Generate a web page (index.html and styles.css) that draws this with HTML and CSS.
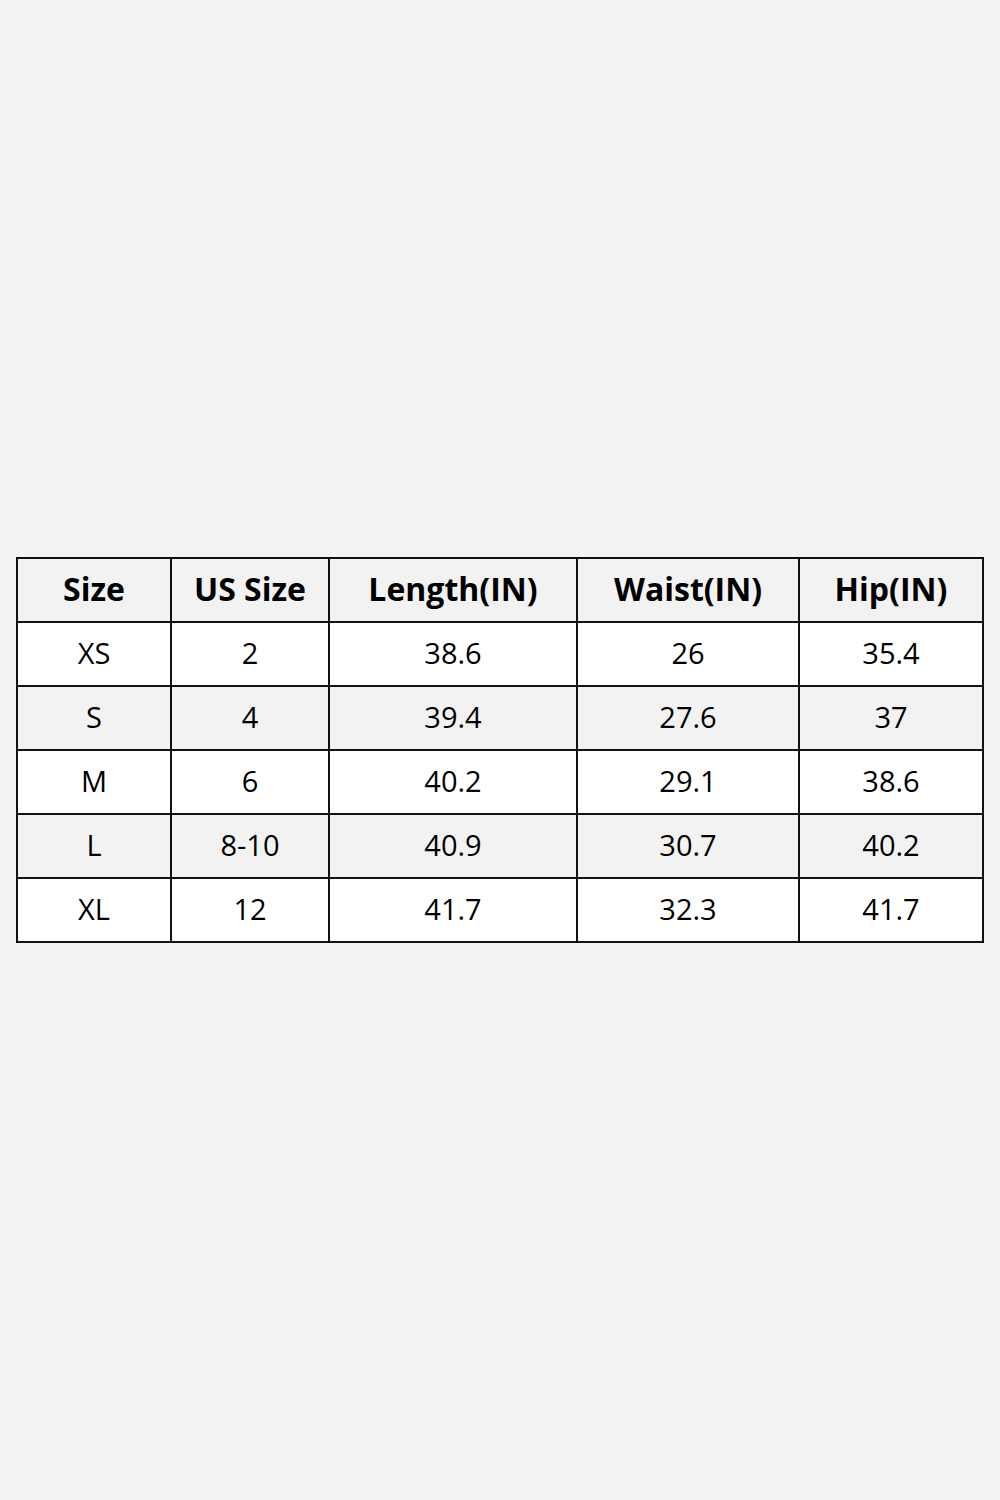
FILE: index.html
```html
<!DOCTYPE html>
<html>
<head>
<meta charset="utf-8">
<link rel="stylesheet" href="styles.css">
</head>
<body>
<div class="page">
<table class="chart">
<colgroup>
<col class="c1"><col class="c2"><col class="c3"><col class="c4"><col class="c5">
</colgroup>
<thead>
<tr class="head"><th>Size</th><th>US Size</th><th>Length(IN)</th><th>Waist(IN)</th><th>Hip(IN)</th></tr>
</thead>
<tbody>
<tr><td>XS</td><td>2</td><td>38.6</td><td>26</td><td>35.4</td></tr>
<tr class="alt"><td>S</td><td>4</td><td>39.4</td><td>27.6</td><td>37</td></tr>
<tr><td>M</td><td>6</td><td>40.2</td><td>29.1</td><td>38.6</td></tr>
<tr class="alt"><td>L</td><td>8-10</td><td>40.9</td><td>30.7</td><td>40.2</td></tr>
<tr><td>XL</td><td>12</td><td>41.7</td><td>32.3</td><td>41.7</td></tr>
</tbody>
</table>
</div>
</body>
</html>
```

FILE: styles.css
```css
html, body {
  margin: 0;
  padding: 0;
  background: #f2f3f5;
}
.page {
  height: 1500px;
  display: flex;
  align-items: center;
  justify-content: center;
}
.chart {
  border-collapse: collapse;
  width: 966px;
  table-layout: fixed;
  font-family: "Open Sans", "Noto Sans", sans-serif;
  color: #000;
  border: 2px solid #111;
}
.c1 { width: 154px; }
.c2 { width: 158px; }
.c3 { width: 248px; }
.c4 { width: 222px; }
.c5 { width: 184px; }
.chart th, .chart td {
  border: 2px solid #111;
  height: 58px;
  padding: 0 0 4px 0;
  text-align: center;
  vertical-align: middle;
  font-size: 29px;
  line-height: 1;
  background: #fff;
}
.chart th {
  font-weight: 700;
  font-size: 32px;
  background: #f2f2f2;
  height: 59px;
  padding-bottom: 3px;
}
.chart .alt td {
  background: #f2f2f2;
}
```
